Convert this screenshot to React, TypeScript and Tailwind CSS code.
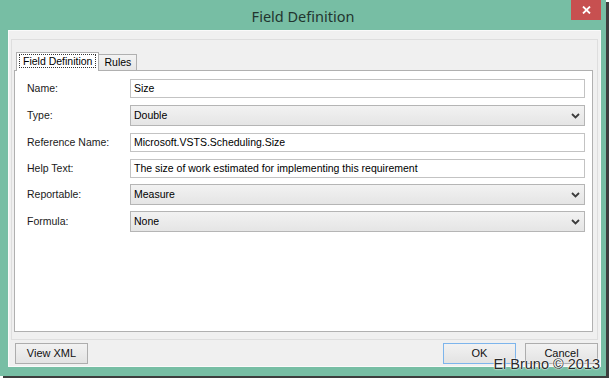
import React from "react";

const ui = "font-['Liberation_Sans',Arial,sans-serif]";

function Chevron() {
  return (
    <svg width="9" height="6" viewBox="0 0 9 6" className="shrink-0">
      <path d="M1 1 L4.5 4.5 L8 1" fill="none" stroke="#3c3c3c" strokeWidth="1.8" />
    </svg>
  );
}

function TextRow({ label, value, mt }: { label: string; value: string; mt: string }) {
  return (
    <div className={`flex items-center ${mt}`}>
      <div className="w-[103px] text-[10.5px] text-[#1a1a1a] leading-none">{label}</div>
      <div className="flex-1 h-[19px] bg-white border border-[#c3c3c3] flex items-center pl-[3px] text-[10.5px] text-black leading-none">
        {value}
      </div>
    </div>
  );
}

function SelectRow({ label, value, mt }: { label: string; value: string; mt: string }) {
  return (
    <div className={`flex items-center ${mt}`}>
      <div className="w-[103px] text-[10.5px] text-[#1a1a1a] leading-none">{label}</div>
      <div className="flex-1 h-[21px] bg-gradient-to-b from-[#f2f2f2] to-[#e5e5e5] border border-[#b5b5b5] flex items-center pl-[3px] pr-[4px] text-[10.5px] text-black leading-none">
        <span className="flex-1">{value}</span>
        <Chevron />
      </div>
    </div>
  );
}

function Btn({ children, primary }: { children: React.ReactNode; primary?: boolean }) {
  return (
    <div
      className={`w-[73px] h-[21px] flex items-center justify-center text-[11px] text-[#111] leading-none bg-gradient-to-b from-[#f2f2f2] to-[#e3e3e3] border ${
        primary ? "border-[#7db5ec]" : "border-[#adadad]"
      }`}
    >
      {children}
    </div>
  );
}

export default function App() {
  return (
    <div className={`w-[613px] h-[380px] bg-white relative overflow-hidden ${ui}`}>
      <div className="w-[606px] h-[376px] bg-[#77bea4] flex flex-col shadow-[3px_2px_0_0_#3d3d3d]">
        {/* title bar */}
        <div className="h-[30px] relative flex items-center justify-center">
          <span className="text-[14.5px] text-[#22352f] font-['Noto_Sans',sans-serif] leading-none mt-[2px]">
            Field Definition
          </span>
          <div className="absolute right-[5px] top-0 w-[30px] h-[20px] bg-[#c75050] flex items-center justify-center">
            <svg width="9" height="8" viewBox="0 0 9 8">
              <path d="M1 0.5 L8 7.5 M8 0.5 L1 7.5" stroke="white" strokeWidth="1.8" />
            </svg>
          </div>
        </div>
        {/* client */}
        <div className="ml-[8px] mr-[5px] h-[337px] bg-[#f0f0f0] border border-[#fafafa] flex flex-col">
          <div className="mx-[2px] mt-[8px] h-[301px] border border-[#dedede] flex flex-col pt-[12px] pl-[2px] pr-[4px]">
            {/* tabs */}
            <div className="flex items-end h-[18px] pl-[2px] relative z-10">
              <div className="h-[19px] -mb-px bg-white border border-b-0 border-[#b0b0b0] px-[2px] pt-[1px]">
                <div className="border border-dotted border-[#333] px-[3px] h-[14px] flex items-center text-[10.5px] text-black leading-none">
                  Field Definition
                </div>
              </div>
              <div className="h-[16px] bg-gradient-to-b from-[#f3f3f3] to-[#e6e6e6] border border-l-0 border-b-0 border-[#b0b0b0] px-[5px] flex items-center text-[10.5px] text-black leading-none">
                Rules
              </div>
            </div>
            {/* panel */}
            <div className="h-[262px] bg-white border border-[#b0b0b0] pt-[8px] pl-[12px] pr-[7px] flex flex-col">
              <TextRow label="Name:" value="Size" mt="mt-0" />
              <SelectRow label="Type:" value="Double" mt="mt-[7px]" />
              <TextRow label="Reference Name:" value="Microsoft.VSTS.Scheduling.Size" mt="mt-[7px]" />
              <TextRow
                label="Help Text:"
                value="The size of work estimated for implementing this requirement"
                mt="mt-[7px]"
              />
              <SelectRow label="Reportable:" value="Measure" mt="mt-[6px]" />
              <SelectRow label="Formula:" value="None" mt="mt-[6px]" />
            </div>
          </div>
          {/* buttons */}
          <div className="flex items-center mt-[3px] pl-[6px] pr-[2px]">
            <Btn>View XML</Btn>
            <div className="flex-1" />
            <Btn primary>OK</Btn>
            <div className="w-[9px]" />
            <Btn>Cancel</Btn>
          </div>
        </div>
      </div>
      {/* watermark */}
      <div className="absolute right-[13px] top-[357px] text-[14.5px] leading-none text-[#2a2a2a] font-['Liberation_Sans',sans-serif] [text-shadow:0_0_1px_#fff,0_0_1px_#fff,0_0_2px_#fff]">
        El Bruno © 2013
      </div>
    </div>
  );
}
